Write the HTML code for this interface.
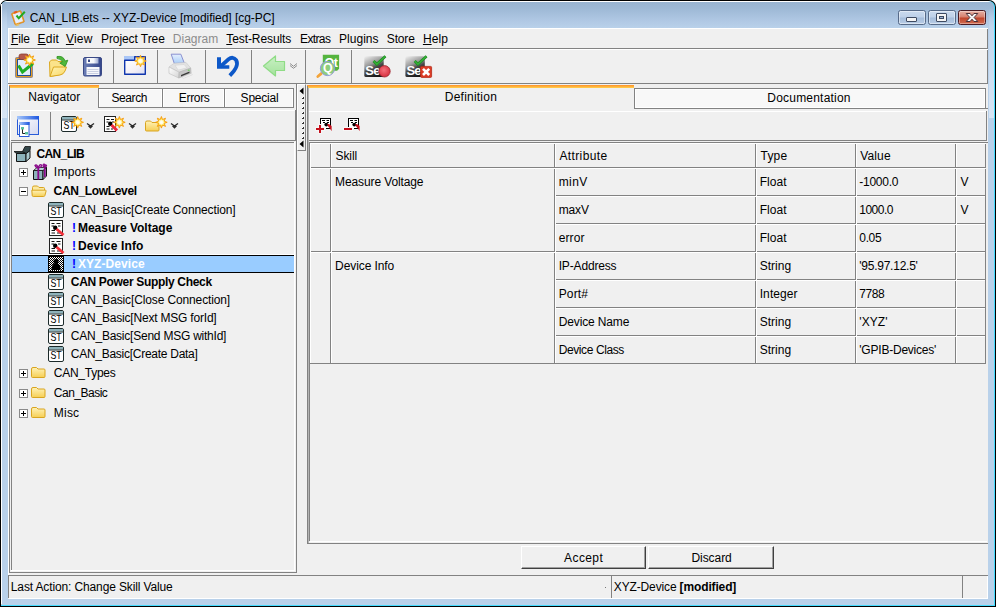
<!DOCTYPE html>
<html><head><meta charset="utf-8"><title>CAN_LIB.ets -- XYZ-Device [modified] [cg-PC]</title>
<style>
*{box-sizing:border-box}
html,body{margin:0;padding:0}
body{width:996px;height:607px;overflow:hidden;position:relative;background:#fff;font:12px "Liberation Sans",sans-serif;color:#000}
.a{position:absolute}
.t{position:absolute;white-space:pre;line-height:14px;height:14px}
svg{position:absolute;overflow:visible}
u{text-decoration:underline}
</style></head><body>
<div class="a" style="left:0;top:0;width:996px;height:607px;background:#000;border-radius:7px 7px 0 0"></div>
<div class="a" style="left:1px;top:1px;width:994px;height:605px;background:#45dcff;border-radius:6px 6px 0 0"></div>
<div class="a" style="left:1px;top:1px;width:993px;height:604px;background:linear-gradient(#fff 0,#fff 1px,#99b4d1 1px,#9db8d5 7px,#afc7e3 19px,#b9d1ea 27px,#b9d1ea 100%);border-radius:6px 6px 0 0"></div>
<div class="a" style="left:1px;top:4px;width:1px;height:600px;background:#fff"></div>
<div class="a" style="left:2px;top:8px;width:5px;height:110px;background:linear-gradient(rgba(216,229,244,0) 0,#c4d8ee 25px,#d8e5f4 110px)"></div>
<div class="a" style="left:989px;top:8px;width:5px;height:110px;background:linear-gradient(rgba(216,229,244,0) 0,#c4d8ee 25px,#d8e5f4 110px)"></div>
<div class="a" style="left:8px;top:28px;width:980px;height:571px;background:#f0f0f0"></div>
<svg style="left:9px;top:9px" width="18" height="18" viewBox="9 9 18 18">
<g transform="translate(18 17.500) scale(.9) translate(-18 -17.500) rotate(-18 18 18)">
<rect x="12.500" y="11" width="11" height="13.500" rx="1" fill="#f0a030" stroke="#d88418" stroke-width=".8"/>
<rect x="13.800" y="12.300" width="8.400" height="10.800" fill="#e6ecfb"/>
<rect x="15.500" y="9.800" width="3.600" height="2.600" fill="#e85a20"/>
<rect x="13" y="24.300" width="4" height="1.800" fill="#e8c060"/>
</g>
<path d="M16.500 15.500 l2.300 2.800 6-6.500" fill="none" stroke="#22a822" stroke-width="2"/>
</svg>

<div class="t" style="left:29.7px;top:11px;letter-spacing:-0.04px;">CAN_LIB.ets -- XYZ-Device [modified] [cg-PC]</div>
<div class="a" style="left:898px;top:10px;width:28px;height:15px;border:1px solid #566a88;border-radius:2.5px;background:linear-gradient(#c9daee 0,#bed1e9 46%,#a5bddb 54%,#b9cde6 100%);box-shadow:inset 0 0 0 1px rgba(255,255,255,.45)"></div>
<div class="a" style="left:928px;top:10px;width:28px;height:15px;border:1px solid #566a88;border-radius:2.5px;background:linear-gradient(#c9daee 0,#bed1e9 46%,#a5bddb 54%,#b9cde6 100%);box-shadow:inset 0 0 0 1px rgba(255,255,255,.45)"></div>
<div class="a" style="left:958px;top:10px;width:28px;height:15px;border:1px solid #4a1a22;border-radius:2.5px;background:linear-gradient(#e6b0a4 0,#d6806e 46%,#c0452c 54%,#d06c52 100%);box-shadow:inset 0 0 0 1px rgba(255,255,255,.35)"></div>
<div class="a" style="left:906px;top:17px;width:11px;height:5px;border:1px solid #3e4b62;border-radius:1px;background:#f4f4f4"></div>
<div class="a" style="left:936px;top:13px;width:11px;height:9px;border:1px solid #3e4b62;border-radius:1px;background:#f4f4f4"></div>
<div class="a" style="left:939px;top:16px;width:5px;height:3px;border:1px solid #3e4b62;background:#9db4d3"></div>
<svg style="left:965px;top:12px" width="14" height="11" viewBox="0 0 14 11"><path d="M1.200 1.500h3.900l1.900 2.300 1.900-2.300h3.900l-3.700 4 3.700 4h-3.900l-1.900-2.300-1.900 2.300h-3.900l3.700-4z" fill="#f6f6f6" stroke="#4a3038" stroke-width="1" stroke-linejoin="round"/></svg>
<div class="t" style="left:10.9px;top:32px;letter-spacing:-0.09px;"><u>F</u>ile</div>
<div class="t" style="left:37.6px;top:32px;letter-spacing:0.20px;"><u>E</u>dit</div>
<div class="t" style="left:65.9px;top:32px;letter-spacing:0.20px;"><u>V</u>iew</div>
<div class="t" style="left:101.0px;top:32px;letter-spacing:-0.08px;">Project Tree</div>
<div class="t" style="left:172.8px;top:32px;letter-spacing:0.02px;color:#8c8c8c;">Diagram</div>
<div class="t" style="left:226.3px;top:32px;letter-spacing:-0.09px;"><u>T</u>est-Results</div>
<div class="t" style="left:300.0px;top:32px;letter-spacing:-0.62px;">Extras</div>
<div class="t" style="left:339.1px;top:32px;letter-spacing:0.01px;">Plugins</div>
<div class="t" style="left:386.8px;top:32px;letter-spacing:-0.16px;">Store</div>
<div class="t" style="left:422.9px;top:32px;letter-spacing:0.08px;"><u>H</u>elp</div>
<div class="a" style="left:8px;top:28px;width:980px;height:1px;background:#fff"></div>
<div class="a" style="left:8px;top:28px;width:1px;height:547px;background:#fff"></div>
<div class="a" style="left:8px;top:48px;width:980px;height:1px;background:#828282"></div>
<div class="a" style="left:987px;top:29px;width:1px;height:20px;background:#828282"></div>
<div class="a" style="left:8px;top:49px;width:980px;height:1px;background:#fff"></div>
<div class="a" style="left:8px;top:49px;width:1px;height:34px;background:#fff"></div>
<div class="a" style="left:8px;top:83px;width:980px;height:1px;background:#828282"></div>
<div class="a" style="left:987px;top:50px;width:1px;height:34px;background:#828282"></div>
<div class="a" style="left:113px;top:50px;width:1px;height:33px;background:#828282"></div>
<div class="a" style="left:157px;top:50px;width:1px;height:33px;background:#828282"></div>
<div class="a" style="left:205px;top:50px;width:1px;height:33px;background:#828282"></div>
<div class="a" style="left:251px;top:50px;width:1px;height:33px;background:#828282"></div>
<div class="a" style="left:305px;top:50px;width:1px;height:33px;background:#828282"></div>
<div class="a" style="left:351px;top:50px;width:1px;height:33px;background:#828282"></div>
<svg width="0" height="0" style="left:0;top:0"><defs>
<radialGradient id="stg"><stop offset="0" stop-color="#ffffff"/><stop offset=".28" stop-color="#fffbe0"/><stop offset=".55" stop-color="#ffe84a"/><stop offset="1" stop-color="#ffc400"/></radialGradient>
<linearGradient id="fold" x1="0" y1="0" x2="1" y2="1"><stop offset="0" stop-color="#fff3b0"/><stop offset="1" stop-color="#f9d766"/></linearGradient>
<linearGradient id="flop" x1="0" y1="0" x2="1" y2="0"><stop offset="0" stop-color="#6c7fb6"/><stop offset="1" stop-color="#34458a"/></linearGradient>
<linearGradient id="flopw" x1="0" y1="0" x2="1" y2="0"><stop offset="0" stop-color="#fff"/><stop offset=".6" stop-color="#f4f6fb"/><stop offset="1" stop-color="#9aa8d0"/></linearGradient>
<linearGradient id="winb" x1="0" y1="0" x2="1" y2="1"><stop offset="0" stop-color="#fff"/><stop offset=".6" stop-color="#f4f0f6"/><stop offset="1" stop-color="#d8dcf2"/></linearGradient>
<linearGradient id="grn" x1="0" y1="0" x2="0" y2="1"><stop offset="0" stop-color="#c9f0c4"/><stop offset="1" stop-color="#a4e29c"/></linearGradient>
<linearGradient id="seg" x1="0.1" y1="0" x2=".55" y2="1"><stop offset="0" stop-color="#eaeaea"/><stop offset=".4" stop-color="#9c9c9c"/><stop offset=".62" stop-color="#484848"/><stop offset="1" stop-color="#181818"/></linearGradient>
<radialGradient id="redc" cx=".45" cy=".4" r=".6"><stop offset="0" stop-color="#f4707c"/><stop offset="1" stop-color="#d62f3e"/></radialGradient>
<linearGradient id="prnl" x1="0" y1="0" x2="1" y2="1"><stop offset="0" stop-color="#ffffff"/><stop offset="1" stop-color="#d4d4d4"/></linearGradient>
<linearGradient id="prn" x1="0" y1="0" x2="0" y2="1"><stop offset="0" stop-color="#e8e8e8"/><stop offset="1" stop-color="#9a9a9a"/></linearGradient>
<linearGradient id="pap" x1="0" y1="0" x2="0" y2="1"><stop offset="0" stop-color="#e6f0fe"/><stop offset="1" stop-color="#a8cdf8"/></linearGradient>
<path id="star" d="M0.00 -5.80 L1.15 -2.77 L4.10 -4.10 L2.77 -1.15 L5.80 0.00 L2.77 1.15 L4.10 4.10 L1.15 2.77 L0.00 5.80 L-1.15 2.77 L-4.10 4.10 L-2.77 1.15 L-5.80 0.00 L-2.77 -1.15 L-4.10 -4.10 L-1.15 -2.77Z" stroke-linejoin="round"/>
</defs></svg>
<!-- 1 clipboard check -->
<svg style="left:14px;top:52px" width="24" height="28" viewBox="14 52 24 28">
<rect x="15.500" y="57.500" width="17" height="20" rx="1" fill="#e49a22" stroke="#8a8a98" stroke-width="1"/>
<rect x="17.500" y="59.500" width="13" height="16" fill="#e3edfb" stroke="#1f4f96" stroke-width="1"/>
<rect x="19" y="54" width="9.500" height="5.500" rx="2.200" fill="#b4584a" stroke="#8a4032" stroke-width=".8"/>
<path d="M18.500 65.500 l4 6.500 L33 63.500" fill="none" stroke="#1fae27" stroke-width="3" stroke-linejoin="miter"/>
<use href="#star" x="29.600" y="60" fill="url(#stg)" stroke="#f59a10" stroke-width=".9"/>
</svg>
<!-- 2 folder open with arrow -->
<svg style="left:46px;top:52px" width="26" height="28" viewBox="46 52 26 28">
<path d="M49.500 62 l2-2 h5 l1.500 1.500 h6.500 v5 L62 74 l-12 2.500z" fill="#fbe38a" stroke="#dba820" stroke-width="1" stroke-linejoin="round"/>
<path d="M50 76.500 l3.500-9.500 h13 l-1.500 4 q-1.500 3.500-5 4z" fill="url(#fold)" stroke="#dba820" stroke-width="1" stroke-linejoin="round"/>
<path d="M57 56.500 q6.500-1 8 4.500 l2.800-.8 -2.600 6.300 -5.400-3.500 2.600-.9 q-1.200-3.400-5.400-3.600z" fill="#4fb83c" stroke="#2c8f22" stroke-width=".8" stroke-linejoin="round"/>
</svg>
<!-- 3 floppy -->
<svg style="left:82px;top:55px" width="22" height="23" viewBox="82 55 22 23">
<rect x="83.500" y="57.500" width="18" height="18.500" rx="1.500" fill="url(#flop)" stroke="#3b4a86" stroke-width="1"/>
<rect x="86.500" y="58" width="12" height="5.500" fill="url(#flopw)"/>
<rect x="88" y="59.500" width="2" height="2.500" fill="#3b4a86"/>
<rect x="86.500" y="67" width="13" height="8" fill="#f6f7fb"/>
<path d="M87.500 69.500h11M87.500 71.500h11M87.500 73.500h11" stroke="#c9cfe2" stroke-width="1"/>
</svg>
<!-- 4 new window -->
<svg style="left:122px;top:52px" width="28" height="26" viewBox="122 52 28 26">
<rect x="124" y="56" width="11" height="4" fill="#a9c6f6"/>
<rect x="124.700" y="60.200" width="20.600" height="13.800" fill="url(#winb)"/>
<path d="M124.700 74.200 v-14 h10 v-3.500 h10.600 v17.500z" fill="none" stroke="#1036ae" stroke-width="1.400" stroke-linejoin="round"/>
<use href="#star" x="140.500" y="61" fill="url(#stg)" stroke="#f59a10" stroke-width=".8"/>
</svg>
<!-- 5 printer -->
<svg style="left:166px;top:52px" width="28" height="28" viewBox="166 52 28 28">
<path d="M171.200 54.200 h9.600 l3.500 8.800 -10 .5z" fill="url(#pap)" stroke="#7f86cc" stroke-width=".9" stroke-linejoin="round"/>
<path d="M169 67 l5-3.700 12-.9 4.700 5.600 -11.500 4.200z" fill="#e2e2e2" stroke="#c8c8c8" stroke-width=".6"/>
<path d="M175 65.300 l9-.8 3 3.300 -8.800 2.300z" fill="#f1f1f1" stroke="#cfcfcf" stroke-width=".5"/>
<path d="M169 67 l10.200 5.200 -.4 5.800 -9.800-4.600z" fill="url(#prnl)" stroke="#bdbdbd" stroke-width=".6" stroke-linejoin="round"/>
<path d="M179.200 72.200 l11.500-4.200 .4 5.200 -12.300 4.800z" fill="#c6c6c6" stroke="#b0b0b0" stroke-width=".6" stroke-linejoin="round"/>
<path d="M181 75 l8.500-3.500 v1.600 l-8.500 3.500z" fill="#3a3a3a"/>
<path d="M182 77.300 l9.500-3.800 .8 1.300 -9 3.600z" fill="#f4f4f4" stroke="#c8c8c8" stroke-width=".4"/>
<rect x="187.800" y="69.700" width="1.800" height="1" fill="#5fd04a"/>
</svg>
<!-- 6 undo -->
<svg style="left:214px;top:54px" width="28" height="26" viewBox="214 54 28 26">
<path d="M220 66.800 L228.500 59.300 Q233 55.800 236.200 60.200 Q239.500 66 229.800 75.600" fill="none" stroke="#0d58c8" stroke-width="3.800"/>
<path d="M217 57.300 h4 v7.900 h8.300 v3.600 h-12.300z" fill="#0d58c8"/>
</svg>
<!-- 7 back arrow -->
<svg style="left:260px;top:54px" width="40" height="26" viewBox="260 54 40 26">
<path d="M263.500 66 l12-10 v5.500 h9 v9 h-9 v5.500z" fill="url(#grn)" stroke="#8fdc86" stroke-width="1.200" stroke-linejoin="round"/>
<path d="M290 63.500 l3.500 2.800 3.500-2.800M290 65.500 l3.500 2.800 3.500-2.800" fill="none" stroke="#8e8e8e" stroke-width="1"/>
</svg>
<!-- 8 Qt magnifier -->
<svg style="left:314px;top:52px" width="28" height="28" viewBox="314 52 28 28">
<defs><clipPath id="lens"><circle cx="327.500" cy="68.500" r="6.600"/></clipPath></defs>
<path d="M322.800 54.700 h16.300 v14.100 l-2 2 h-14.300z" fill="#55b43e"/>
<text x="324.600" y="66.600" font-family="Liberation Sans,sans-serif" font-weight="bold" font-size="12.500" fill="#fff" letter-spacing="-.6">Qt</text>
<path d="M321.200 73.600 l-3.400 2.900" stroke="#f3a43a" stroke-width="2.800" stroke-linecap="round"/>
<circle cx="327.500" cy="68.500" r="7.100" fill="#8fcd7c" stroke="#8f96dc" stroke-width="1"/>
<text clip-path="url(#lens)" x="323" y="72" font-family="Liberation Sans,sans-serif" font-weight="bold" font-size="12.500" fill="#fff">Q</text>
</svg>
<!-- 9 Se red -->
<svg style="left:360px;top:52px" width="34" height="28" viewBox="360 52 34 28">
<rect x="364.300" y="56.300" width="19.400" height="20.600" rx="1.500" fill="url(#seg)"/>
<text x="365.300" y="75.200" font-family="Liberation Sans,sans-serif" font-weight="bold" font-size="13" fill="#fff" letter-spacing="-.7">Se</text>
<path d="M373.600 61 l3.200 3.300 8.600-8" fill="none" stroke="#1f8a22" stroke-width="2.800"/>
<path d="M373.600 61 l3.200 3.300 8.600-8" fill="none" stroke="#35b038" stroke-width="1.400"/>
<circle cx="384.500" cy="71.300" r="5.700" fill="url(#redc)" stroke="#9a2430" stroke-width=".8"/>
</svg>
<!-- 10 Se x -->
<svg style="left:401px;top:52px" width="34" height="28" viewBox="401 52 34 28">
<rect x="405.400" y="56.300" width="19.400" height="20.600" rx="1.500" fill="url(#seg)"/>
<text x="406.400" y="75.200" font-family="Liberation Sans,sans-serif" font-weight="bold" font-size="13" fill="#fff" letter-spacing="-.7">Se</text>
<path d="M414.700 61 l3.200 3.300 8.600-8" fill="none" stroke="#1f8a22" stroke-width="2.800"/>
<path d="M414.700 61 l3.200 3.300 8.600-8" fill="none" stroke="#35b038" stroke-width="1.400"/>
<rect x="420.600" y="66.400" width="11" height="11" rx="1" fill="#dc3c26" stroke="#b42a18" stroke-width=".8"/>
<path d="M423 68.800 l6.200 6.200 M429.200 68.800 l-6.200 6.200" stroke="#fff" stroke-width="2.600"/>
</svg>

<div class="a" style="left:99px;top:88px;width:64px;height:20px;background:#f7f7f7;border-top:1px solid #828282;border-right:1px solid #828282;border-bottom:1px solid #828282;box-shadow:inset 1px 1px 0 #fff, inset -1px 0 0 #fff"></div>
<div class="t" style="left:111.5px;top:91px;letter-spacing:-0.42px;">Search</div>
<div class="a" style="left:163px;top:88px;width:62px;height:20px;background:#f7f7f7;border-top:1px solid #828282;border-right:1px solid #828282;border-bottom:1px solid #828282;box-shadow:inset 1px 1px 0 #fff, inset -1px 0 0 #fff"></div>
<div class="t" style="left:178.8px;top:91px;letter-spacing:-0.33px;">Errors</div>
<div class="a" style="left:225px;top:88px;width:69px;height:20px;background:#f7f7f7;border-top:1px solid #828282;border-right:1px solid #828282;border-bottom:1px solid #828282;box-shadow:inset 1px 1px 0 #fff, inset -1px 0 0 #fff"></div>
<div class="t" style="left:240.6px;top:91px;letter-spacing:-0.21px;">Special</div>
<div class="a" style="left:9px;top:85px;width:90px;height:1px;background:#ff9a2e"></div>
<div class="a" style="left:9px;top:86px;width:90px;height:1px;background:#ffb03a"></div>
<div class="a" style="left:9px;top:87px;width:90px;height:1px;background:#ffc648"></div>
<div class="a" style="left:9px;top:86px;width:1px;height:487px;background:#828282"></div>
<div class="a" style="left:98px;top:88px;width:1px;height:20px;background:#828282"></div>
<div class="t" style="left:28.3px;top:90px;letter-spacing:0.08px;">Navigator</div>
<div class="a" style="left:296px;top:84px;width:1px;height:489px;background:#828282"></div>
<div class="a" style="left:9px;top:572px;width:288px;height:1px;background:#828282"></div>
<div class="a" style="left:11px;top:110px;width:284px;height:1px;background:#fff"></div>
<div class="a" style="left:10px;top:110px;width:1px;height:31px;background:#fff"></div>
<div class="a" style="left:11px;top:140px;width:285px;height:1px;background:#828282"></div>
<div class="a" style="left:295px;top:110px;width:1px;height:31px;background:#828282"></div>
<div class="a" style="left:50px;top:112px;width:1px;height:28px;background:#828282"></div>
<div class="a" style="left:11px;top:142px;width:284px;height:1px;background:#828282"></div>
<div class="a" style="left:11px;top:142px;width:1px;height:429px;background:#828282"></div>
<div class="a" style="left:11px;top:570px;width:284px;height:1px;background:#fff"></div>
<div class="a" style="left:294px;top:142px;width:1px;height:429px;background:#fff"></div>
<svg width="0" height="0" style="left:0;top:0"><defs>
<linearGradient id="nvb" x1="0" y1="0" x2="1" y2="0"><stop offset="0" stop-color="#a8c8fa"/><stop offset="1" stop-color="#1c56e0"/></linearGradient>
<linearGradient id="nvw" x1="0" y1="0" x2="1" y2="1"><stop offset="0" stop-color="#fff"/><stop offset="1" stop-color="#d4d8f0"/></linearGradient>
<linearGradient id="fo2" x1="0" y1="0" x2="0" y2="1"><stop offset="0" stop-color="#fff2b8"/><stop offset="1" stop-color="#f6cf55"/></linearGradient>
<g id="chev"><path d="M0 .4 l3.500 2.600 3.500-2.600 M1.500 2.900 l2 1.900 2-1.900" fill="none" stroke="#2a2a2a" stroke-width="1.300"/></g>
<g id="sticon"><rect x=".5" y=".5" width="15" height="15" rx="1.500" fill="#fff" stroke="#1c2a2a" stroke-width="1"/><rect x="1" y="1" width="14" height="2.600" fill="#8eb2ba"/><path d="M1 4h14" stroke="#1c2a2a" stroke-width="1"/><text transform="translate(2.400 13.200) scale(.88 1.060)" font-family="Liberation Sans,sans-serif" font-size="10" fill="#000">ST</text></g>
<g id="skicon"><rect x=".5" y=".5" width="11" height="15" fill="#fff" stroke="#222" stroke-width="1"/><path d="M2.500 3.500h3M7 3.500h3M2.500 6h2M8 6h2M2.500 10.500h3M2.500 13h3M7 13h2" stroke="#111" stroke-width="1"/><circle cx="6.200" cy="7.800" r="2.200" fill="#000"/><path d="M7.500 9 l5.500 5.500" stroke="#f0283c" stroke-width="3"/></g>
<g id="skicon2"><rect x=".5" y=".5" width="13" height="15" fill="#fff" stroke="#222" stroke-width="1"/><path d="M2.500 3.500h3M7.500 3.500h4M2.500 6h2.500M9 6h2.500M2.500 10.500h3.500M2.500 13h3.500M8 13h3" stroke="#111" stroke-width="1"/><circle cx="6.200" cy="7.800" r="2.200" fill="#000"/><path d="M7.500 9 l7 6" stroke="#f5303a" stroke-width="2.800"/></g>
<g id="plus"><rect x=".5" y=".5" width="8" height="8" fill="#fff" stroke="#8a8a8a" stroke-width="1"/><path d="M2 4.500h5M4.500 2v5" stroke="#000" stroke-width="1"/></g>
<g id="minus"><rect x=".5" y=".5" width="8" height="8" fill="#fff" stroke="#8a8a8a" stroke-width="1"/><path d="M2 4.500h5" stroke="#000" stroke-width="1"/></g>
<g id="folder"><path d="M.5 3.500 q0-1.500 1.500-1.500 h3.500 l1.500 1.500 h6 q1 0 1 1 v6.500 q0 1-1 1 h-11.500 q-1 0-1-1z" fill="url(#fo2)" stroke="#d9a520" stroke-width="1"/></g>
</defs></svg>
<!-- navigator icon -->
<svg style="left:16px;top:115px" width="24" height="23" viewBox="16 115 24 23">
<rect x="17.500" y="116.500" width="21" height="18" fill="url(#nvw)" stroke="#2a5cd8" stroke-width="1"/>
<rect x="17" y="116" width="22" height="3.500" fill="url(#nvb)"/>
<rect x="19.500" y="122.500" width="9.500" height="14" fill="#fff" stroke="#2a5cd8" stroke-width="1"/>
<rect x="19" y="122" width="10.500" height="3" fill="url(#nvb)"/>
<path d="M22.500 128v5.500h3" fill="none" stroke="#222" stroke-width="1"/>
<rect x="21" y="127" width="3" height="2.500" fill="#58c0a0"/><rect x="25" y="132" width="3" height="2.500" fill="#58c0a0"/>
</svg>
<!-- ST new -->
<svg style="left:61px;top:116px" width="36" height="18" viewBox="0 0 36 18">
<use href="#sticon"/><use href="#star" x="16.700" y="6.300" fill="url(#stg)" stroke="#f59a10" stroke-width=".9"/>
<use href="#chev" x="26" y="7"/>
</svg>
<svg style="left:104px;top:116px" width="36" height="18" viewBox="0 0 36 18">
<use href="#skicon"/><use href="#star" x="15.400" y="6.300" fill="url(#stg)" stroke="#f59a10" stroke-width=".9"/>
<use href="#chev" x="25" y="7"/>
</svg>
<svg style="left:145px;top:116px" width="36" height="18" viewBox="0 0 36 18">
<use href="#folder" x="0" y="3"/><use href="#star" x="16.400" y="6.300" fill="url(#stg)" stroke="#f59a10" stroke-width=".9"/>
<use href="#chev" x="26" y="7"/>
</svg>

<div class="a" style="left:12px;top:254px;width:282px;height:1px;background:#fff"></div>
<div class="a" style="left:12px;top:255px;width:282px;height:18px;background:#99ccff;border-top:1px solid #000;border-bottom:1px solid #000"></div>
<div class="t" style="left:36.6px;top:147px;letter-spacing:-0.66px;font-weight:bold;">CAN_LIB</div>
<div class="t" style="left:53.8px;top:165px;letter-spacing:0.27px;">Imports</div>
<div class="t" style="left:53.6px;top:184px;letter-spacing:-0.35px;font-weight:bold;">CAN_LowLevel</div>
<div class="t" style="left:70.8px;top:203px;letter-spacing:-0.12px;">CAN_Basic[Create Connection]</div>
<div class="t" style="left:72.0px;top:221px;font-weight:bold;color:#0000ff">!</div>
<div class="t" style="left:77.9px;top:221px;font-weight:bold;">Measure Voltage</div>
<div class="t" style="left:72.0px;top:239px;font-weight:bold;color:#0000ff">!</div>
<div class="t" style="left:77.9px;top:239px;letter-spacing:0.15px;font-weight:bold;">Device Info</div>
<div class="t" style="left:72.0px;top:257px;font-weight:bold;color:#0000ff">!</div>
<div class="t" style="left:77.9px;top:257px;letter-spacing:0.08px;font-weight:bold;color:#fff;">XYZ-Device</div>
<div class="t" style="left:70.8px;top:275px;letter-spacing:-0.32px;font-weight:bold;">CAN Power Supply Check</div>
<div class="t" style="left:70.8px;top:293px;letter-spacing:-0.13px;">CAN_Basic[Close Connection]</div>
<div class="t" style="left:70.8px;top:311px;letter-spacing:-0.20px;">CAN_Basic[Next MSG forId]</div>
<div class="t" style="left:70.8px;top:329px;letter-spacing:-0.23px;">CAN_Basic[Send MSG withId]</div>
<div class="t" style="left:70.8px;top:347px;letter-spacing:-0.27px;">CAN_Basic[Create Data]</div>
<div class="t" style="left:53.8px;top:366px;letter-spacing:-0.26px;">CAN_Types</div>
<div class="t" style="left:53.8px;top:386px;letter-spacing:-0.50px;">Can_Basic</div>
<div class="t" style="left:53.8px;top:406px;letter-spacing:0.21px;">Misc</div>
<!-- tree icons -->
<svg style="left:13px;top:145px" width="19" height="18" viewBox="13 145 19 18">
<path d="M16.500 153.500 h9.500 v8 h-9.500z" fill="#8cb2ba" stroke="#111" stroke-width="1"/>
<path d="M26 153.500 l4-3 v7.500 l-4 3.500z" fill="#a9c8ce" stroke="#111" stroke-width="1" stroke-linejoin="round"/>
<path d="M16.500 153.500 l-2.500-2 h8.500 l3.500 2z" fill="#2c3c3e" stroke="#111" stroke-width=".8" stroke-linejoin="round"/>
<path d="M22.500 151.500 l2.500-5 h5.500 l-.5 4 -4 3z" fill="#34474a" stroke="#111" stroke-width=".8" stroke-linejoin="round"/>
</svg>
<svg style="left:32px;top:163px" width="16" height="18" viewBox="32 163 16 18">
<path d="M33.500 170.500 h9.500 v9 h-9.500z" fill="#8cb2ba" stroke="#111" stroke-width="1"/>
<path d="M43 170.500 l3.500-3 v8.500 l-3.500 3.500z" fill="#a9c8ce" stroke="#111" stroke-width="1" stroke-linejoin="round"/>
<path d="M33.500 170.500 l3.500-3 h9.500 l-3.500 3z" fill="#b8d2d6" stroke="#111" stroke-width=".8" stroke-linejoin="round"/>
<path d="M38.300 168 v11.500 M44.800 167.500 v9.500" stroke="#8a0a8a" stroke-width="1.800"/>
<path d="M38.500 168 q-3-.5-3.500-2.500 q1.500-2 3.500 2.500 q1-4.500 3-3 q.5 2-3 3 M43.500 167 q-1-2.500 .5-3 q2 1 -.5 3 q2-3 3-1.500 q0 1.500 -3 1.500" fill="none" stroke="#8a0a8a" stroke-width="1.300"/>
</svg>
<svg style="left:19px;top:168px" width="9" height="9" viewBox="0 0 9 9"><use href="#plus"/></svg>
<svg style="left:19px;top:187px" width="9" height="9" viewBox="0 0 9 9"><use href="#minus"/></svg>
<svg style="left:19px;top:369px" width="9" height="9" viewBox="0 0 9 9"><use href="#plus"/></svg>
<svg style="left:19px;top:389px" width="9" height="9" viewBox="0 0 9 9"><use href="#plus"/></svg>
<svg style="left:19px;top:409px" width="9" height="9" viewBox="0 0 9 9"><use href="#plus"/></svg>
<!-- open folder -->
<svg style="left:31px;top:184px" width="16" height="14" viewBox="31 184 16 14">
<path d="M32.500 195.500 v-8 q0-1.500 1.500-1.500 h3.500 l1.500 1.500 h4.500 q1 0 1 1 v1.500" fill="#fbe9a0" stroke="#d9a520" stroke-width="1"/>
<path d="M31.800 190.200 h13.700 q.8 0 .6 .8 l-1.200 4.500 q-.3 1-1.300 1 h-10.300 q-1 0-1.100-1z" fill="url(#fo2)" stroke="#d9a520" stroke-width="1" stroke-linejoin="round"/>
</svg>
<svg style="left:31px;top:365px" width="15" height="14" viewBox="0 0 15 14"><use href="#folder" x="0" y="0.500"/></svg>
<svg style="left:31px;top:385px" width="15" height="14" viewBox="0 0 15 14"><use href="#folder" x="0" y="0.500"/></svg>
<svg style="left:31px;top:405px" width="15" height="14" viewBox="0 0 15 14"><use href="#folder" x="0" y="0.500"/></svg>
<!-- ST icons -->
<svg style="left:48px;top:202px" width="16" height="16" viewBox="0 0 16 16"><use href="#sticon"/></svg>
<svg style="left:48px;top:274px" width="16" height="16" viewBox="0 0 16 16"><use href="#sticon"/></svg>
<svg style="left:48px;top:292px" width="16" height="16" viewBox="0 0 16 16"><use href="#sticon"/></svg>
<svg style="left:48px;top:310px" width="16" height="16" viewBox="0 0 16 16"><use href="#sticon"/></svg>
<svg style="left:48px;top:328px" width="16" height="16" viewBox="0 0 16 16"><use href="#sticon"/></svg>
<svg style="left:48px;top:346px" width="16" height="16" viewBox="0 0 16 16"><use href="#sticon"/></svg>
<!-- skill icons -->
<svg style="left:49px;top:220px" width="16" height="17" viewBox="0 0 16 17"><use href="#skicon2"/></svg>
<svg style="left:49px;top:238px" width="16" height="17" viewBox="0 0 16 17"><use href="#skicon2"/></svg>
<!-- selected device icon -->
<svg style="left:48px;top:256px" width="16" height="16" viewBox="0 0 16 16">
<defs><pattern id="chk" width="2" height="2" patternUnits="userSpaceOnUse"><rect width="2" height="2" fill="#fff"/><rect width="1" height="1" fill="#000"/><rect x="1" y="1" width="1" height="1" fill="#000"/></pattern></defs>
<rect x=".5" y=".5" width="15" height="15" fill="url(#chk)" stroke="#000" stroke-width="1"/>
<path d="M8 3 q2.500 0 2.500 2.500 q0 1.500-1 2 q3 1 3 6.500 h-9 q0-5.500 3-6.500 q-1-.5-1-2 q0-2.500 2.500-2.500z" fill="#000"/>
</svg>

<div class="a" style="left:297px;top:84px;width:9px;height:67px;background:#f0f0f0;border-right:1px solid #828282;border-bottom:1px solid #828282;border-left:1px solid #fff;border-top:1px solid #fff"></div>
<svg style="left:299px;top:87px" width="6" height="62" viewBox="0 0 6 62"><path d="M4.500 .5v7l-4-3.500zM4.500 53.500v7l-4-3.500z" fill="#000"/><rect x="3" y="10" width="2" height="2" fill="#333"/><rect x="3" y="10" width="1" height="1" fill="#fff"/><rect x="3" y="15" width="2" height="2" fill="#333"/><rect x="3" y="15" width="1" height="1" fill="#fff"/><rect x="3" y="20" width="2" height="2" fill="#333"/><rect x="3" y="20" width="1" height="1" fill="#fff"/><rect x="3" y="25" width="2" height="2" fill="#333"/><rect x="3" y="25" width="1" height="1" fill="#fff"/><rect x="3" y="30" width="2" height="2" fill="#333"/><rect x="3" y="30" width="1" height="1" fill="#fff"/><rect x="3" y="35" width="2" height="2" fill="#333"/><rect x="3" y="35" width="1" height="1" fill="#fff"/><rect x="3" y="40" width="2" height="2" fill="#333"/><rect x="3" y="40" width="1" height="1" fill="#fff"/><rect x="3" y="45" width="2" height="2" fill="#333"/><rect x="3" y="45" width="1" height="1" fill="#fff"/><rect x="3" y="50" width="2" height="2" fill="#333"/><rect x="3" y="50" width="1" height="1" fill="#fff"/></svg>
<div class="a" style="left:307px;top:85px;width:327px;height:1px;background:#ff9a2e"></div>
<div class="a" style="left:307px;top:86px;width:327px;height:1px;background:#ffb03a"></div>
<div class="a" style="left:307px;top:87px;width:327px;height:1px;background:#ffc648"></div>
<div class="a" style="left:307px;top:86px;width:1px;height:458px;background:#828282"></div>
<div class="a" style="left:308px;top:88px;width:1px;height:455px;background:#b4b4b4"></div>
<div class="a" style="left:634px;top:88px;width:352px;height:21px;background:#f8f8f8;border:1px solid #828282;box-shadow:inset -1px -1px 0 #fff, inset 1px 1px 0 #fff"></div>
<div class="a" style="left:634px;top:108px;width:354px;height:1px;background:#828282"></div>
<div class="t" style="left:444.8px;top:90px;letter-spacing:0.22px;">Definition</div>
<div class="t" style="left:767.3px;top:91px;letter-spacing:0.21px;">Documentation</div>
<div class="a" style="left:307px;top:543px;width:681px;height:1px;background:#828282"></div>
<div class="a" style="left:309px;top:111px;width:677px;height:1px;background:#fff"></div>
<div class="a" style="left:309px;top:140px;width:678px;height:1px;background:#828282"></div>
<div class="a" style="left:986px;top:111px;width:1px;height:30px;background:#828282"></div>
<div class="a" style="left:309px;top:142px;width:679px;height:1px;background:#828282"></div>
<div class="a" style="left:309px;top:142px;width:1px;height:399px;background:#828282"></div>
<div class="a" style="left:310px;top:541px;width:677px;height:1px;background:#fff"></div>
<svg width="0" height="0" style="left:0;top:0"><defs>
<g id="skmini"><rect x="0" y="0" width="11" height="11" fill="#fff"/><path d="M0 .5h11M.5 0v9M10.500 0v8M6 10.500h4" stroke="#000" stroke-width="1" fill="none"/><path d="M2 2.500h3M6.500 2.500h2.500M3 4.500h2M7 4.500h2" stroke="#000" stroke-width="1"/><circle cx="6.300" cy="6.600" r="1.900" fill="#000"/><path d="M6.800 6.400 L9 6 L11.600 8 L11.600 13 Z" fill="#c4101c"/></g>
</defs></svg>
<svg style="left:320px;top:118px" width="14" height="16" viewBox="0 0 14 16"><use href="#skmini"/></svg>
<div class="a" style="left:315px;top:127px;width:10px;height:4px;background:#f6f6f6"></div>
<div class="a" style="left:318px;top:124px;width:4px;height:10px;background:#f6f6f6"></div>
<div class="a" style="left:316px;top:128px;width:8px;height:2px;background:#c4101c"></div>
<div class="a" style="left:319px;top:125px;width:2px;height:8px;background:#c4101c"></div>
<svg style="left:348px;top:118px" width="14" height="16" viewBox="0 0 14 16"><use href="#skmini"/></svg>
<div class="a" style="left:343px;top:127px;width:10px;height:4px;background:#f6f6f6"></div>
<div class="a" style="left:344px;top:128px;width:8px;height:2px;background:#c4101c"></div>

<div class="a" style="left:310px;top:167px;width:676px;height:1px;background:#828282"></div>
<div class="a" style="left:310px;top:251px;width:676px;height:1px;background:#828282"></div>
<div class="a" style="left:310px;top:363px;width:676px;height:1px;background:#828282"></div>
<div class="a" style="left:556px;top:195px;width:430px;height:1px;background:#828282"></div>
<div class="a" style="left:556px;top:223px;width:430px;height:1px;background:#828282"></div>
<div class="a" style="left:556px;top:279px;width:430px;height:1px;background:#828282"></div>
<div class="a" style="left:556px;top:307px;width:430px;height:1px;background:#828282"></div>
<div class="a" style="left:556px;top:335px;width:430px;height:1px;background:#828282"></div>
<div class="a" style="left:330px;top:143px;width:1px;height:24px;background:#828282"></div>
<div class="a" style="left:330px;top:169px;width:1px;height:195px;background:#828282"></div>
<div class="a" style="left:554px;top:143px;width:1px;height:24px;background:#828282"></div>
<div class="a" style="left:554px;top:169px;width:1px;height:195px;background:#828282"></div>
<div class="a" style="left:755px;top:143px;width:1px;height:24px;background:#828282"></div>
<div class="a" style="left:755px;top:169px;width:1px;height:195px;background:#828282"></div>
<div class="a" style="left:855px;top:143px;width:1px;height:24px;background:#828282"></div>
<div class="a" style="left:855px;top:169px;width:1px;height:195px;background:#828282"></div>
<div class="a" style="left:955px;top:143px;width:1px;height:24px;background:#828282"></div>
<div class="a" style="left:955px;top:169px;width:1px;height:195px;background:#828282"></div>
<div class="a" style="left:985px;top:143px;width:1px;height:24px;background:#828282"></div>
<div class="a" style="left:985px;top:169px;width:1px;height:195px;background:#828282"></div>
<div class="a" style="left:310px;top:143px;width:676px;height:1px;background:#fff"></div>
<div class="a" style="left:310px;top:143px;width:1px;height:220px;background:#fff"></div>
<div class="a" style="left:331px;top:143px;width:1px;height:24px;background:#fff"></div>
<div class="a" style="left:331px;top:169px;width:1px;height:194px;background:#fff"></div>
<div class="a" style="left:555px;top:143px;width:1px;height:24px;background:#fff"></div>
<div class="a" style="left:555px;top:169px;width:1px;height:194px;background:#fff"></div>
<div class="a" style="left:756px;top:143px;width:1px;height:24px;background:#fff"></div>
<div class="a" style="left:756px;top:169px;width:1px;height:194px;background:#fff"></div>
<div class="a" style="left:856px;top:143px;width:1px;height:24px;background:#fff"></div>
<div class="a" style="left:856px;top:169px;width:1px;height:194px;background:#fff"></div>
<div class="a" style="left:956px;top:143px;width:1px;height:24px;background:#fff"></div>
<div class="a" style="left:956px;top:169px;width:1px;height:194px;background:#fff"></div>
<div class="a" style="left:311px;top:168px;width:674px;height:1px;background:#fff"></div>
<div class="a" style="left:311px;top:252px;width:674px;height:1px;background:#fff"></div>
<div class="a" style="left:556px;top:196px;width:429px;height:1px;background:#fff"></div>
<div class="a" style="left:556px;top:224px;width:429px;height:1px;background:#fff"></div>
<div class="a" style="left:556px;top:280px;width:429px;height:1px;background:#fff"></div>
<div class="a" style="left:556px;top:308px;width:429px;height:1px;background:#fff"></div>
<div class="a" style="left:556px;top:336px;width:429px;height:1px;background:#fff"></div>
<div class="t" style="left:335.5px;top:149px;letter-spacing:-0.08px;">Skill</div>
<div class="t" style="left:559.5px;top:149px;letter-spacing:0.36px;">Attribute</div>
<div class="t" style="left:760.5px;top:149px;letter-spacing:0.22px;">Type</div>
<div class="t" style="left:860.2px;top:149px;letter-spacing:0.16px;">Value</div>
<div class="t" style="left:335.1px;top:175px;letter-spacing:-0.12px;">Measure Voltage</div>
<div class="t" style="left:335.1px;top:259px;letter-spacing:-0.09px;">Device Info</div>
<div class="t" style="left:558.7px;top:175px;letter-spacing:0.41px;">minV</div>
<div class="t" style="left:759.7px;top:175px;letter-spacing:0.04px;">Float</div>
<div class="t" style="left:859.3px;top:175px;letter-spacing:-0.26px;">-1000.0</div>
<div class="t" style="left:960.4px;top:175px;">V</div>
<div class="t" style="left:558.7px;top:203px;letter-spacing:-0.12px;">maxV</div>
<div class="t" style="left:759.7px;top:203px;letter-spacing:0.04px;">Float</div>
<div class="t" style="left:859.3px;top:203px;letter-spacing:-0.52px;">1000.0</div>
<div class="t" style="left:960.4px;top:203px;">V</div>
<div class="t" style="left:558.7px;top:231px;letter-spacing:0.13px;">error</div>
<div class="t" style="left:759.7px;top:231px;letter-spacing:0.04px;">Float</div>
<div class="t" style="left:859.3px;top:231px;letter-spacing:-0.34px;">0.05</div>
<div class="t" style="left:558.7px;top:259px;letter-spacing:-0.16px;">IP-Address</div>
<div class="t" style="left:759.7px;top:259px;letter-spacing:0.01px;">String</div>
<div class="t" style="left:859.3px;top:259px;letter-spacing:-0.25px;">'95.97.12.5'</div>
<div class="t" style="left:558.7px;top:287px;letter-spacing:0.14px;">Port#</div>
<div class="t" style="left:759.7px;top:287px;letter-spacing:0.09px;">Integer</div>
<div class="t" style="left:859.3px;top:287px;letter-spacing:-0.45px;">7788</div>
<div class="t" style="left:558.7px;top:315px;letter-spacing:-0.13px;">Device Name</div>
<div class="t" style="left:759.7px;top:315px;letter-spacing:0.01px;">String</div>
<div class="t" style="left:859.3px;top:315px;letter-spacing:0.06px;">'XYZ'</div>
<div class="t" style="left:558.7px;top:343px;letter-spacing:-0.40px;">Device Class</div>
<div class="t" style="left:759.7px;top:343px;letter-spacing:0.01px;">String</div>
<div class="t" style="left:859.3px;top:343px;letter-spacing:-0.22px;">'GPIB-Devices'</div>
<div class="a" style="left:521px;top:546px;width:125px;height:23px;background:#f0f0f0;border-right:1px solid #404040;border-bottom:1px solid #404040;border-top:1px solid #fff;border-left:1px solid #fff;box-shadow:inset -1px -1px 0 #a0a0a0"></div>
<div class="t" style="left:564.1px;top:551px;letter-spacing:0.39px;">Accept</div>
<div class="a" style="left:648px;top:546px;width:126px;height:23px;background:#f0f0f0;border-right:1px solid #404040;border-bottom:1px solid #404040;border-top:1px solid #fff;border-left:1px solid #fff;box-shadow:inset -1px -1px 0 #a0a0a0"></div>
<div class="t" style="left:691.5px;top:551px;letter-spacing:-0.07px;">Discard</div>
<div class="a" style="left:8px;top:575px;width:980px;height:1px;background:#828282"></div>
<div class="a" style="left:8px;top:575px;width:1px;height:23px;background:#828282"></div>
<div class="a" style="left:9px;top:598px;width:979px;height:1px;background:#fff"></div>
<div class="a" style="left:987px;top:576px;width:1px;height:23px;background:#fff"></div>
<div class="a" style="left:611px;top:576px;width:1px;height:22px;background:#828282"></div>
<div class="a" style="left:962px;top:576px;width:1px;height:22px;background:#828282"></div>
<div class="a" style="left:605px;top:587px;width:1px;height:1px;background:#777"></div>
<div class="t" style="left:10.8px;top:580px;letter-spacing:-0.13px;">Last Action: Change Skill Value</div>
<div class="t" style="left:613.8px;top:580px;letter-spacing:-0.14px;">XYZ-Device <b>[modified]</b></div>
</body></html>
